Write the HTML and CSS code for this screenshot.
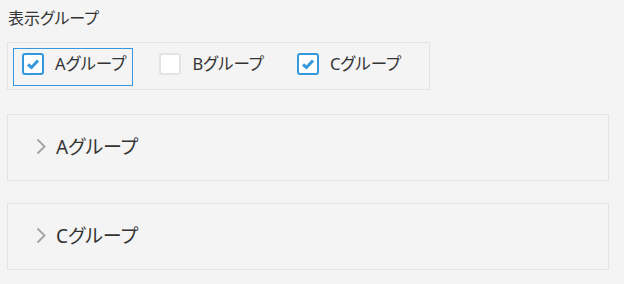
FILE: index.html
```html
<!DOCTYPE html>
<html lang="ja">
<head>
  <meta charset="UTF-8" />
  <meta name="viewport" content="width=device-width, initial-scale=1.0"/>
  <title>表示グループ</title>
  <link rel="stylesheet" href="styles.css">
</head>
<body>

  <main class="page">
    <!-- Which groups to show -->
    <div class="field-label">表示グループ</div>
    <div class="group-select">
      <label class="group-option is-focused">
        <span class="checkbox is-checked">
          <svg width="14" height="12" viewBox="0 0 14 12"><polyline points="2,6.5 5.5,9.5 12,2.5" /></svg>
        </span>
        <span class="option-text">Aグループ</span>
      </label>
      <label class="group-option">
        <span class="checkbox"></span>
        <span class="option-text">Bグループ</span>
      </label>
      <label class="group-option">
        <span class="checkbox is-checked">
          <svg width="14" height="12" viewBox="0 0 14 12"><polyline points="2,6.5 5.5,9.5 12,2.5" /></svg>
        </span>
        <span class="option-text">Cグループ</span>
      </label>
    </div>

    <!-- Collapsed group panels -->
    <div class="group-panel">
      <svg class="chevron" width="10" height="17" viewBox="0 0 10 17"><polyline points="1.5,1.5 8.5,8.5 1.5,15.5" /></svg>
      <span class="panel-title">Aグループ</span>
    </div>
    <div class="group-panel">
      <svg class="chevron" width="10" height="17" viewBox="0 0 10 17"><polyline points="1.5,1.5 8.5,8.5 1.5,15.5" /></svg>
      <span class="panel-title">Cグループ</span>
    </div>
  </main>

</body>
</html>
```

FILE: styles.css
```css
/* Page base */
body {
  margin: 0;
  padding: 0;
  background-color: #f4f4f4;
  color: #333;
  font-family: "Noto Sans", "Noto Sans CJK JP", sans-serif;
  font-feature-settings: "palt";
}

.page {
  padding: 6px 15px 0 7px;
}

/* Field title */
.field-label {
  font-size: 16px;
  line-height: 24px;
  padding-left: 1px;
  margin-bottom: 12px;
}

/* Checkbox group */
.group-select {
  display: inline-flex;
  gap: 17px;
  padding: 5px 21px 3px 5px;
  border: 1px solid #e3e3e3;
}

.group-option {
  display: flex;
  align-items: center;
  padding: 4px 6px 10px 8px;
  border: 1px solid transparent;
  cursor: pointer;
}

.group-option.is-focused {
  border-color: #3498db;
}

.checkbox {
  width: 22px;
  height: 22px;
  box-sizing: border-box;
  border: 2px solid #e3e3e3;
  border-radius: 3px;
  background-color: white;
  display: flex;
  align-items: center;
  justify-content: center;
  margin-right: 11px;
}

.checkbox.is-checked {
  border-color: #3498db;
}

.checkbox svg polyline {
  fill: none;
  stroke: #3498db;
  stroke-width: 3;
}

.option-text {
  font-size: 16.5px;
  line-height: 22px;
}

/* Collapsible panels */
.group-panel {
  display: flex;
  align-items: center;
  height: 62px;
  margin-top: 24px;
  padding-left: 28px;
  padding-bottom: 3px;
  border: 1px solid #e3e3e3;
}

.group-panel + .group-panel {
  margin-top: 22px;
}

.chevron {
  margin-right: 10px;
}

.chevron polyline {
  fill: none;
  stroke: #a6a6a6;
  stroke-width: 2;
}

.panel-title {
  font-size: 19px;
}
```
